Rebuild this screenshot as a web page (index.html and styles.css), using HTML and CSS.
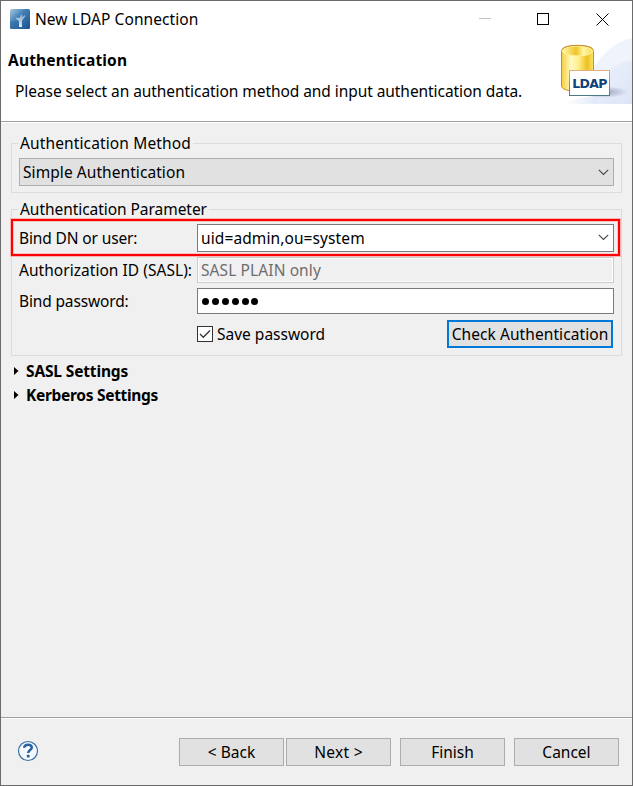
FILE: index.html
```html
<!DOCTYPE html>
<html lang="en">
<head>
<meta charset="utf-8">
<title>New LDAP Connection</title>
<link rel="stylesheet" href="styles.css">
</head>
<body>
<main class="dialog">
  <header class="titlebar">
    <svg class="app-icon" width="20" height="20" viewBox="0 0 20 20">
      <defs>
        <linearGradient id="appBlue" x1="0" y1="0" x2="1" y2="1">
          <stop offset="0" stop-color="#a9cbe4"/><stop offset=".4" stop-color="#4581b5"/><stop offset="1" stop-color="#164f8d"/>
        </linearGradient>
        <linearGradient id="trunk" x1="0" y1="0" x2="0" y2="1">
          <stop offset="0" stop-color="#8db4d2"/><stop offset="1" stop-color="#fff"/>
        </linearGradient>
      </defs>
      <rect width="20" height="20" rx="1.500" fill="url(#appBlue)"/>
      <path d="M0 12Q9 12 13 20H1Q0 20 0 19Z" fill="#2b679f" opacity=".4"/>
      <path d="M9 18V12L5.500 9.500L6 8.500L9.500 9L11 5.500H12L12.500 8L15 6L15.500 7L12 11.500V18Z" fill="url(#trunk)" opacity=".85"/>
    </svg>
    <span class="title">New LDAP Connection</span>
    <svg class="window-controls" width="132" height="16" viewBox="0 0 132 16" shape-rendering="crispEdges">
      <path d="M0 7.500H12" stroke="#c3c3c3"/>
      <rect x="58.500" y="2.500" width="11" height="11" fill="none" stroke="#000"/>
      <path d="M117.500 2.500L129.500 14.500M129.500 2.500L117.500 14.500" stroke="#000" shape-rendering="auto"/>
    </svg>
  </header>
  <section class="banner">
    <div class="banner-copy">
      <h1>Authentication</h1>
      <p>Please select an authentication method and input authentication data.</p>
    </div>
    <svg class="banner-art" width="75" height="66" viewBox="0 0 75 66">
      <defs>
        <linearGradient id="gold" x1="0" y1="0" x2="1" y2="0">
          <stop offset="0" stop-color="#f5cf3a"/><stop offset=".3" stop-color="#fff9c4"/><stop offset=".52" stop-color="#fff08d"/><stop offset=".8" stop-color="#efc01f"/><stop offset="1" stop-color="#fbe46d"/>
        </linearGradient>
        <linearGradient id="arc" x1="0" y1="0" x2="1" y2="1">
          <stop offset="0" stop-color="#edf2fc"/><stop offset="1" stop-color="#dce5f7"/>
        </linearGradient>
        <linearGradient id="goldTop" x1="0" y1="0" x2="1" y2="0">
          <stop offset="0" stop-color="#fff7a8"/><stop offset=".45" stop-color="#efc528"/><stop offset=".7" stop-color="#fff5a6"/><stop offset="1" stop-color="#f9dc54"/>
        </linearGradient>
        <linearGradient id="card" x1="0" y1="0" x2="0" y2="1">
          <stop offset="0" stop-color="#e0ae84"/><stop offset=".5" stop-color="#829397"/><stop offset="1" stop-color="#4c7c86"/>
        </linearGradient>
        <radialGradient id="shade"><stop offset="0" stop-color="#777c9c" stop-opacity=".7"/><stop offset="1" stop-color="#777c9c" stop-opacity="0"/></radialGradient>
        <linearGradient id="fadeIn" x1="0" y1="0" x2="1" y2="0">
          <stop offset="0" stop-color="#e7edfa" stop-opacity="0"/><stop offset="1" stop-color="#e2e9f8"/>
        </linearGradient>
      </defs>
      <path d="M35 66V32Q52 5 75 0V66Z" fill="#eff3fc"/>
      <path d="M40 66V43Q53 26 75 22V66Z" fill="url(#arc)"/>
      <path d="M5 66Q20 59 40 58V66Z" fill="url(#fadeIn)"/>
      <ellipse cx="46" cy="54" rx="25" ry="6" fill="url(#shade)"/>
      <path d="M4.500 13.500C4.500 5.500 36.500 5.500 36.500 13.500V48C36.500 55 4.500 55 4.500 48Z" fill="url(#gold)" stroke="#d18a2a"/>
      <ellipse cx="20.500" cy="13" rx="15" ry="5" fill="url(#goldTop)" stroke="#fff4a0"/>
      <path d="M5 11.500C7 6 34 6 36 11.500" fill="none" stroke="#c68a22"/>
      <rect x="12.500" y="32.500" width="40" height="25" fill="#fff" stroke="url(#card)"/>
      <text class="card-label" x="32.800" y="50" text-anchor="middle" textLength="35" lengthAdjust="spacing">LDAP</text>
    </svg>
  </section>

  <section class="content">
    <fieldset class="group method">
      <legend><span class="t-method">Authentication Method</span></legend>
      <div class="combo readonly"><span class="t-simple">Simple Authentication</span>
        <svg width="11" height="7" viewBox="0 0 11 7"><path d="M.8 .8L5.500 5.500L10.200 .8" fill="none" stroke="#444" stroke-width="1.100"/></svg>
      </div>
    </fieldset>
    <fieldset class="group parameter">
      <legend><span class="t-param">Authentication Parameter</span></legend>
      <div class="row highlighted">
        <span class="label t-bind">Bind DN or user:</span>
        <div class="combo"><span class="t-uid">uid=admin,ou=system</span>
          <svg width="11" height="7" viewBox="0 0 11 7"><path d="M.8 .8L5.500 5.500L10.200 .8" fill="none" stroke="#444" stroke-width="1.100"/></svg>
        </div>
      </div>
      <div class="row">
        <span class="label t-authz">Authorization ID (SASL):</span>
        <div class="field disabled"><span class="t-sasl">SASL PLAIN only</span></div>
      </div>
      <div class="row password">
        <span class="label t-pass">Bind password:</span>
        <div class="field"><span class="dots"><i></i><i></i><i></i><i></i><i></i><i></i></span></div>
      </div>
      <div class="row actions">
        <span></span>
        <div class="check">
          <svg width="16" height="16" viewBox="0 0 16 16"><rect x=".5" y=".5" width="15" height="15" fill="#fff" stroke="#333"/><path d="M3 8L6.300 11.300L13 4.500" fill="none" stroke="#333" stroke-width="1.300"/></svg>
          <span class="t-save">Save password</span>
        </div>
        <div class="button default"><span class="t-check">Check Authentication</span></div>
      </div>
    </fieldset>
    <div class="expander"><svg width="5" height="8" viewBox="0 0 5 8"><path d="M0 0L4.500 4L0 8Z"/></svg><span class="t-sset">SASL Settings</span></div>
    <div class="expander"><svg width="5" height="8" viewBox="0 0 5 8"><path d="M0 0L4.500 4L0 8Z"/></svg><span class="t-kset">Kerberos Settings</span></div>
  </section>

  <footer class="footer">
    <svg class="help" width="22" height="22" viewBox="0 0 22 22">
      <circle cx="11" cy="11" r="9.500" fill="#f5f9fd" stroke="#3a6ea5" stroke-width="1.200"/>
      <path d="M7.200 7.800C7.300 3.800 14.800 3.600 14.800 7.500C14.800 10 11.200 9.900 11.200 12.900" fill="none" stroke="#2562a0" stroke-width="2.500"/>
      <rect x="9.800" y="14.800" width="2.800" height="2.600" rx=".6" fill="#2562a0"/>
    </svg>
    <div class="nav">
      <div class="button"><span>&lt; Back</span></div>
      <div class="button"><span class="t-next">Next &gt;</span></div>
    </div>
    <div class="button"><span>Finish</span></div>
    <div class="button"><span>Cancel</span></div>
  </footer>
</main>
</body>
</html>
```
FILE: styles.css
```css
* { box-sizing: border-box; }
body { margin: 0; font: 15.5px/20px "Noto Sans", "Open Sans", sans-serif; color: #000; }
svg { display: block; flex: none; }
span { white-space: nowrap; }

.dialog { width: 633px; height: 786px; display: flex; flex-direction: column; border: 1px solid #6b6b6b; background: #f0f0f0; }

.titlebar { height: 37px; flex: none; display: flex; align-items: center; padding: 0 21px 1px 9px; background: #fff; }
.title { margin-left: 5px; letter-spacing: .08px; }
.window-controls { margin-left: auto; }

.banner { height: 84px; flex: none; display: flex; justify-content: space-between; background: #fff; border-bottom: 1px solid #a0a0a0; box-shadow: 0 1px #fff; }
.banner-copy { padding: 12px 0 0 7px; }
.banner h1 { margin: 0; font-size: 15.5px; line-height: 20px; font-weight: 700; letter-spacing: .18px; }
.banner p { margin: 11px 0 0 7px; white-space: nowrap; letter-spacing: -.065px; }
.banner-art { margin-left: -10px; }
.card-label { font: 700 12.5px "DejaVu Sans", sans-serif; fill: #0d427b; }

.content { flex: 1; padding: 11px 10px 0; }
.group { position: relative; min-width: 0; margin: 0; border: 1px solid #dcdcdc; }
.group legend { height: 20px; padding: 0 2px; }
.method { height: 60px; padding: 5px 7px 0; margin-bottom: 6px; }
.parameter { height: 157px; padding: 0; }
.method legend { margin-left: -1px; }
.parameter legend { margin-left: 6px; }

.combo { height: 28px; display: flex; align-items: center; justify-content: space-between; padding: 0 4px 0 3px; border: 1px solid #7a7a7a; background: #fff; }
.readonly { background: #e1e1e1; border-color: #adadad; }
.row { display: grid; grid-template-columns: 178px 417px; align-items: center; padding-left: 7px; }
.highlighted { width: 609px; height: 37px; margin-left: -1px; padding-left: 6px; border: 2px solid #f00; box-shadow: 0 0 0 1px #f8b4b4, inset 0 0 0 1px #f6c5c5; }
.field { height: 26px; display: flex; align-items: center; padding: 0 4px 0 3px; border: 1px solid #7a7a7a; background: #fff; }
.disabled { color: #6d6d6d; background: #f0f0f0; border-color: #ccc; box-shadow: inset 0 0 0 1px #fff; }
.highlighted + .row { margin-top: 1px; }
.password { margin-top: 5px; }
.dots { display: flex; gap: 2.9px; padding: 1px 0 0 1px; }
.dots i { width: 7px; height: 7px; border-radius: 50%; background: #000; }
.actions { grid-template-columns: 178px 1fr 166px; margin-top: 6px; padding-right: 8px; }
.check { display: flex; align-items: center; gap: 4px; }

.t-method { letter-spacing: .13px; }
.t-simple { letter-spacing: .07px; }
.t-param { letter-spacing: -.05px; }
.t-bind { letter-spacing: -.13px; }
.t-uid { letter-spacing: .1px; }
.t-authz { letter-spacing: .04px; }
.t-sasl { letter-spacing: .1px; }
.t-pass { letter-spacing: -.15px; }
.t-check { letter-spacing: .08px; }
.t-sset { letter-spacing: -.15px; }
.t-kset { letter-spacing: -.3px; }
.t-next { letter-spacing: .3px; }

.button { width: 105px; height: 28px; display: flex; align-items: center; justify-content: center; border: 1px solid #adadad; background: #e1e1e1; }
.default { width: 166px; border: 2px solid #0078d7; }
.expander { height: 24px; display: flex; align-items: center; gap: 7px; padding-left: 3px; font-weight: 700; }
.parameter + .expander { margin-top: 3px; }

.footer { height: 68px; flex: none; display: flex; align-items: center; gap: 9px; padding: 0 13px 0 16px; border-top: 1px solid #a0a0a0; box-shadow: inset 0 1px #fff; }
.help { margin-bottom: 2px; }
.nav { display: flex; gap: 2px; margin-left: auto; }
```
